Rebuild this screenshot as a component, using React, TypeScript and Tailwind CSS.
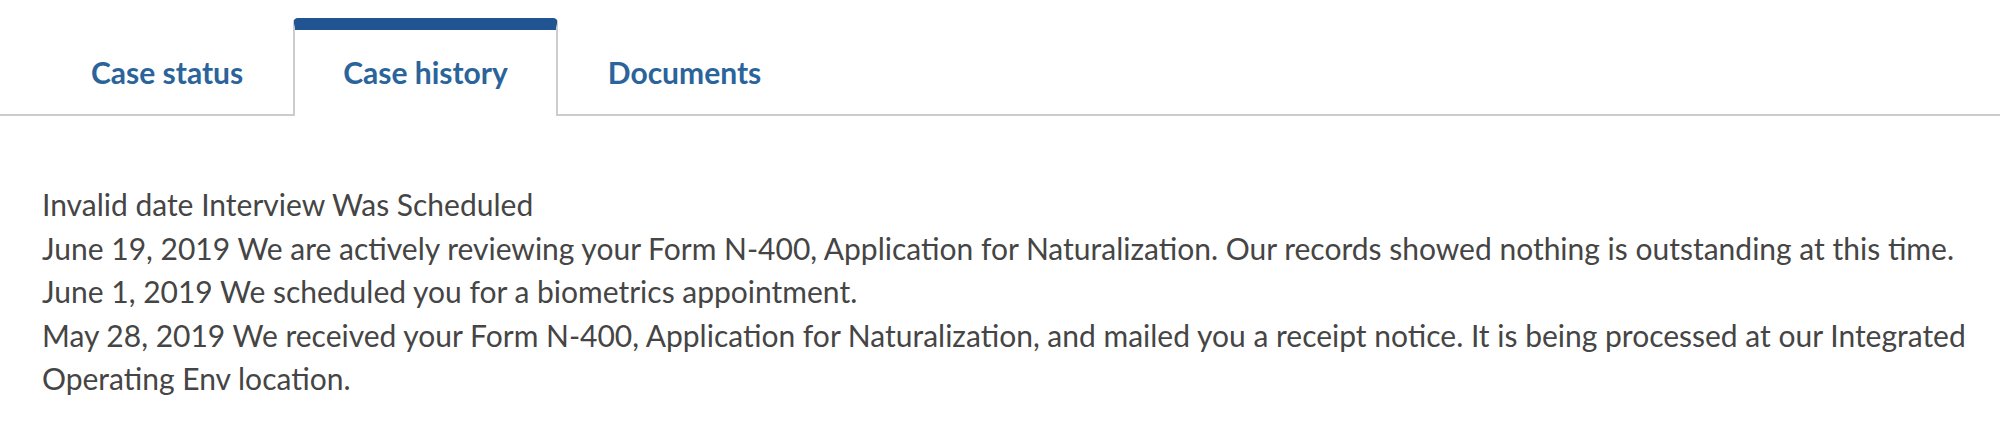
import { useState } from "react";

const tabs = ["Case status", "Case history", "Documents"];

const history = [
  { date: "Invalid date", text: "Interview Was Scheduled" },
  {
    date: "June 19, 2019",
    text: "We are actively reviewing your Form N-400, Application for Naturalization. Our records showed nothing is outstanding at this time.",
  },
  { date: "June 1, 2019", text: "We scheduled you for a biometrics appointment." },
  {
    date: "May 28, 2019",
    text: "We received your Form N-400, Application for Naturalization, and mailed you a receipt notice. It is being processed at our Integrated Operating Env location.",
  },
];

export default function App() {
  const [active, setActive] = useState("Case history");
  return (
    <div className="min-h-screen bg-white font-['Lato',sans-serif]">
      <div className="flex border-b-2 border-[#cccccc] pl-[41px] pt-[18px]">
        {tabs.map((tab) => (
          <button
            key={tab}
            onClick={() => setActive(tab)}
            className={
              tab === active
                ? "-mb-[2px] flex h-[98px] items-center rounded-t-[5px] border-x-2 border-t-[12px] border-x-[#cccccc] border-t-[#205493] bg-white px-[48px] pb-[2px] text-[30px] font-bold text-[#2a649a]"
                : "-mb-[2px] flex h-[98px] items-center border-x-2 border-t-[12px] border-transparent px-[48px] pb-[2px] text-[30px] font-bold text-[#2a649a]"
            }
          >
            {tab}
          </button>
        ))}
      </div>
      <div className="pl-[42px] pr-[8px] pt-[67px] text-[30px] leading-[43.5px] text-[#454545]">
        {history.map((item) => (
          <p key={item.date}>
            {item.date} {item.text}
          </p>
        ))}
      </div>
    </div>
  );
}
